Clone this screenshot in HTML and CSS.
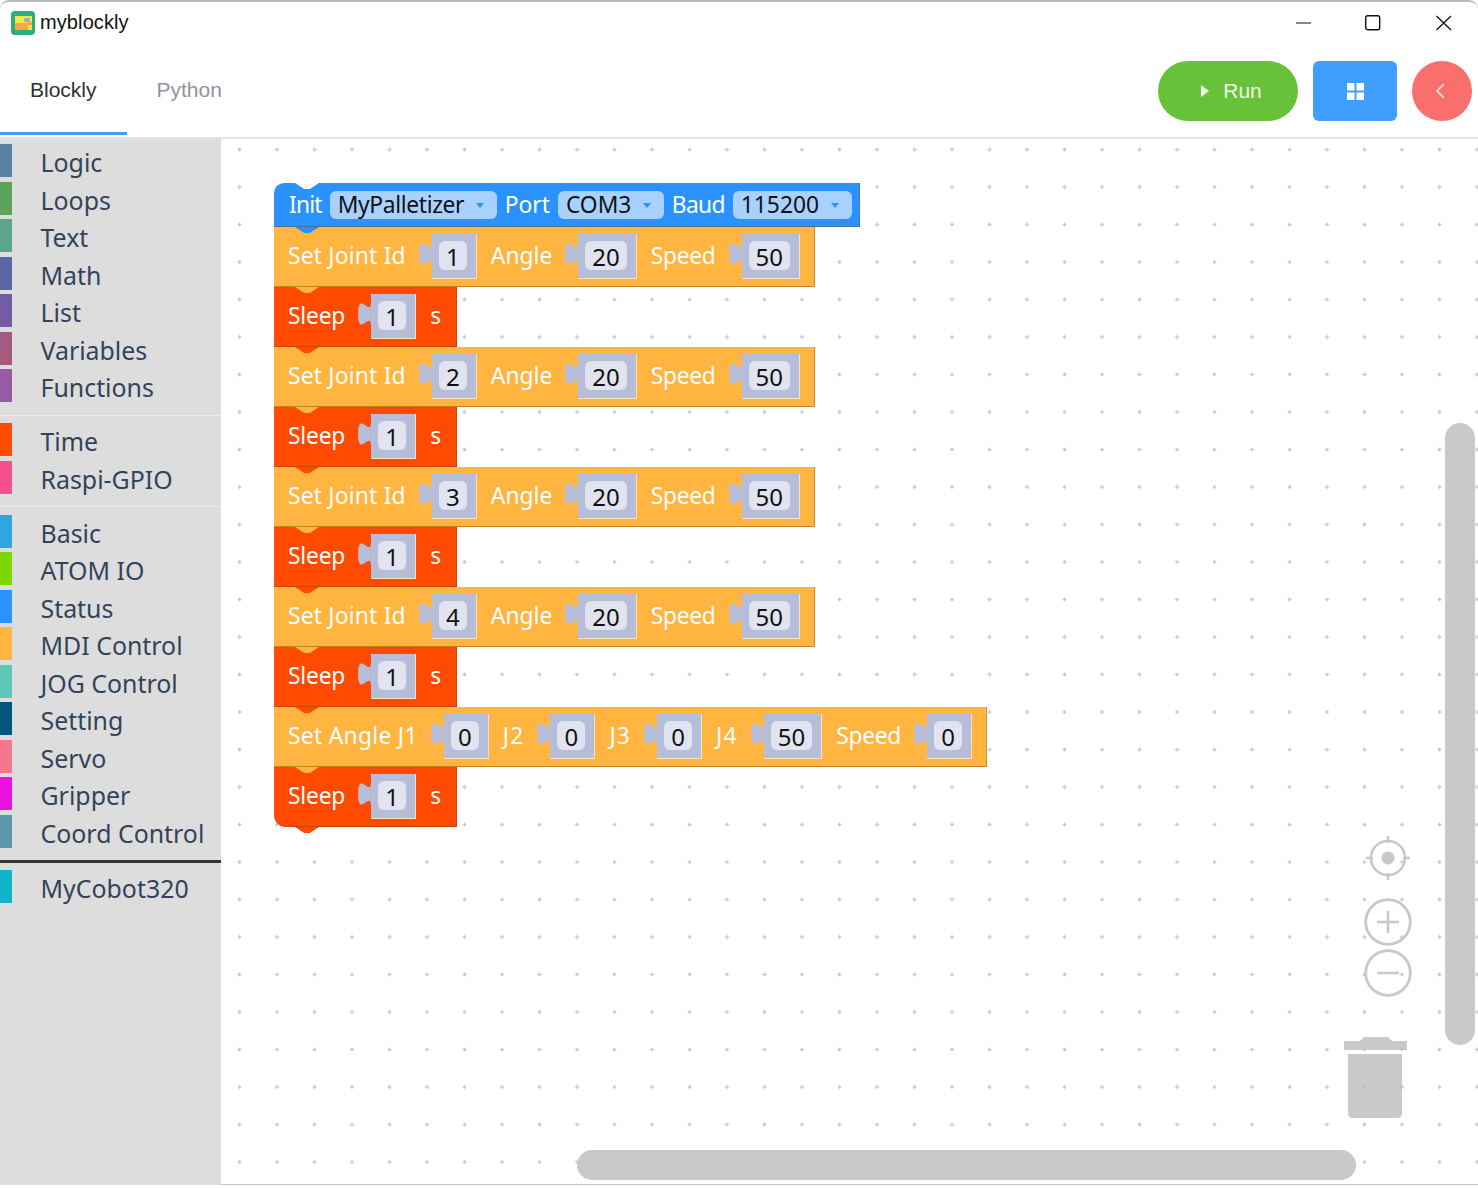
FILE: index.html
```html
<!DOCTYPE html>
<html lang="en">
<head>
<meta charset="utf-8">
<title>myblockly</title>
<link rel="stylesheet" href="styles.css">
</head>
<body>
<div class="window">
  <header class="titlebar">
    <div class="app-title">
      <svg class="logo" viewBox="0 0 24 24" width="24" height="24"><rect width="24" height="24" rx="4" fill="#2dae7a"/><rect x="4" y="5" width="17" height="14" fill="#f6e64a"/><rect x="13" y="7" width="6" height="4" rx="1" fill="#8fb6c8"/><path d="M4 12h12v-1h5v3h-4v5H7l-1 2v-2H4z" fill="#f8a93e"/></svg>
      <span class="app-name">myblockly</span>
    </div>
    <div class="win-controls">
      <svg width="16" height="16" viewBox="0 0 16 16"><path d="M0 8h15" stroke="#111" stroke-width="1.2"/></svg>
      <svg class="wc-max" width="16" height="16" viewBox="0 0 16 16"><rect x=".7" y=".7" width="14" height="14" rx="2" fill="none" stroke="#111" stroke-width="1.4"/></svg>
      <svg width="16" height="16" viewBox="0 0 16 16"><path d="M.5 1l14.500 14M15 1L.5 15" stroke="#111" stroke-width="1.3"/></svg>
    </div>
  </header>

  <nav class="tabbar">
    <div class="tabs">
      <div class="tab tab-active">Blockly</div>
      <div class="tab">Python</div>
    </div>
    <div class="actions">
      <button class="btn btn-run"><svg width="9" height="12" viewBox="0 0 9 12"><path d="M0 0l8 6-8 6z" fill="#f1fbe9"/></svg><span>Run</span></button>
      <button class="btn btn-grid"><svg width="17" height="17" viewBox="0 0 17 17"><path d="M0 0h7.500v7.500H0zM9.500 0H17v7.500H9.500zM0 9.500h7.500V17H0zM9.500 9.500H17V17H9.500z" fill="#fff"/></svg></button>
      <button class="btn btn-back"><svg width="11" height="16" viewBox="0 0 11 16"><path d="M9 1L2 8l7 7" fill="none" stroke="#ffe9e9" stroke-width="1.6"/></svg></button>
    </div>
  </nav>

  <main class="main">
    <aside class="toolbox">
      <div class="cat"><i class="chip c-logic"></i>Logic</div>
      <div class="cat"><i class="chip c-loops"></i>Loops</div>
      <div class="cat"><i class="chip c-text"></i>Text</div>
      <div class="cat"><i class="chip c-math"></i>Math</div>
      <div class="cat"><i class="chip c-list"></i>List</div>
      <div class="cat"><i class="chip c-vars"></i>Variables</div>
      <div class="cat"><i class="chip c-func"></i>Functions</div>
      <div class="sep"></div>
      <div class="cat"><i class="chip c-time"></i>Time</div>
      <div class="cat"><i class="chip c-gpio"></i>Raspi-GPIO</div>
      <div class="sep"></div>
      <div class="cat"><i class="chip c-basic"></i>Basic</div>
      <div class="cat"><i class="chip c-atom"></i>ATOM IO</div>
      <div class="cat"><i class="chip c-status"></i>Status</div>
      <div class="cat"><i class="chip c-mdi"></i>MDI Control</div>
      <div class="cat"><i class="chip c-jog"></i>JOG Control</div>
      <div class="cat"><i class="chip c-setting"></i>Setting</div>
      <div class="cat"><i class="chip c-servo"></i>Servo</div>
      <div class="cat"><i class="chip c-grip"></i>Gripper</div>
      <div class="cat"><i class="chip c-coord"></i>Coord Control</div>
      <div class="sep-dark"></div>
      <div class="cat"><i class="chip c-cobot"></i>MyCobot320</div>
    </aside>

    <section class="workspace">
      <svg class="grid" width="100%" height="100%">
        <defs><pattern id="dots" x="16" y="8" width="37.5" height="37.5" patternUnits="userSpaceOnUse"><path d="M0 2.500h5M2.500 0v5" stroke="#e2e2e2" stroke-width="1"/><circle cx="2.500" cy="2.500" r="1.500" fill="#c8c8c8"/></pattern></defs>
        <rect width="100%" height="100%" fill="url(#dots)"/>
      </svg>

      <div class="stack">
        <div class="block b-init">
          <span class="lbl ls-init">Init</span>
          <span class="drop"><span class="ls-pal">MyPalletizer</span><i class="arrow"></i></span>
          <span class="lbl">Port</span>
          <span class="drop">COM3<i class="arrow"></i></span>
          <span class="lbl ls-baud">Baud</span>
          <span class="drop">115200<i class="arrow"></i></span>
        </div>

        <div class="block b-set">
          <span class="lbl ls-joint">Set Joint Id</span>
          <span class="input"><svg class="plug" width="13" height="24" viewBox="0 0 8 15"><path d="M8 0c0 10-8-8-8 7.500s8-2.500 8 7.500z"/></svg><span class="socket"><b class="num">1</b></span></span>
          <span class="lbl">Angle</span>
          <span class="input"><svg class="plug" width="13" height="24" viewBox="0 0 8 15"><path d="M8 0c0 10-8-8-8 7.500s8-2.500 8 7.500z"/></svg><span class="socket"><b class="num">20</b></span></span>
          <span class="lbl ls-speed">Speed</span>
          <span class="input"><svg class="plug" width="13" height="24" viewBox="0 0 8 15"><path d="M8 0c0 10-8-8-8 7.500s8-2.500 8 7.500z"/></svg><span class="socket"><b class="num">50</b></span></span>
        </div>
        <div class="block b-sleep">
          <span class="lbl ls-sleep">Sleep</span>
          <span class="input"><svg class="plug" width="13" height="24" viewBox="0 0 8 15"><path d="M8 0c0 10-8-8-8 7.500s8-2.500 8 7.500z"/></svg><span class="socket"><b class="num">1</b></span></span>
          <span class="lbl">s</span>
        </div>

        <div class="block b-set">
          <span class="lbl ls-joint">Set Joint Id</span>
          <span class="input"><svg class="plug" width="13" height="24" viewBox="0 0 8 15"><path d="M8 0c0 10-8-8-8 7.500s8-2.500 8 7.500z"/></svg><span class="socket"><b class="num">2</b></span></span>
          <span class="lbl">Angle</span>
          <span class="input"><svg class="plug" width="13" height="24" viewBox="0 0 8 15"><path d="M8 0c0 10-8-8-8 7.500s8-2.500 8 7.500z"/></svg><span class="socket"><b class="num">20</b></span></span>
          <span class="lbl ls-speed">Speed</span>
          <span class="input"><svg class="plug" width="13" height="24" viewBox="0 0 8 15"><path d="M8 0c0 10-8-8-8 7.500s8-2.500 8 7.500z"/></svg><span class="socket"><b class="num">50</b></span></span>
        </div>
        <div class="block b-sleep">
          <span class="lbl ls-sleep">Sleep</span>
          <span class="input"><svg class="plug" width="13" height="24" viewBox="0 0 8 15"><path d="M8 0c0 10-8-8-8 7.500s8-2.500 8 7.500z"/></svg><span class="socket"><b class="num">1</b></span></span>
          <span class="lbl">s</span>
        </div>

        <div class="block b-set">
          <span class="lbl ls-joint">Set Joint Id</span>
          <span class="input"><svg class="plug" width="13" height="24" viewBox="0 0 8 15"><path d="M8 0c0 10-8-8-8 7.500s8-2.500 8 7.500z"/></svg><span class="socket"><b class="num">3</b></span></span>
          <span class="lbl">Angle</span>
          <span class="input"><svg class="plug" width="13" height="24" viewBox="0 0 8 15"><path d="M8 0c0 10-8-8-8 7.500s8-2.500 8 7.500z"/></svg><span class="socket"><b class="num">20</b></span></span>
          <span class="lbl ls-speed">Speed</span>
          <span class="input"><svg class="plug" width="13" height="24" viewBox="0 0 8 15"><path d="M8 0c0 10-8-8-8 7.500s8-2.500 8 7.500z"/></svg><span class="socket"><b class="num">50</b></span></span>
        </div>
        <div class="block b-sleep">
          <span class="lbl ls-sleep">Sleep</span>
          <span class="input"><svg class="plug" width="13" height="24" viewBox="0 0 8 15"><path d="M8 0c0 10-8-8-8 7.500s8-2.500 8 7.500z"/></svg><span class="socket"><b class="num">1</b></span></span>
          <span class="lbl">s</span>
        </div>

        <div class="block b-set">
          <span class="lbl ls-joint">Set Joint Id</span>
          <span class="input"><svg class="plug" width="13" height="24" viewBox="0 0 8 15"><path d="M8 0c0 10-8-8-8 7.500s8-2.500 8 7.500z"/></svg><span class="socket"><b class="num">4</b></span></span>
          <span class="lbl">Angle</span>
          <span class="input"><svg class="plug" width="13" height="24" viewBox="0 0 8 15"><path d="M8 0c0 10-8-8-8 7.500s8-2.500 8 7.500z"/></svg><span class="socket"><b class="num">20</b></span></span>
          <span class="lbl ls-speed">Speed</span>
          <span class="input"><svg class="plug" width="13" height="24" viewBox="0 0 8 15"><path d="M8 0c0 10-8-8-8 7.500s8-2.500 8 7.500z"/></svg><span class="socket"><b class="num">50</b></span></span>
        </div>
        <div class="block b-sleep">
          <span class="lbl ls-sleep">Sleep</span>
          <span class="input"><svg class="plug" width="13" height="24" viewBox="0 0 8 15"><path d="M8 0c0 10-8-8-8 7.500s8-2.500 8 7.500z"/></svg><span class="socket"><b class="num">1</b></span></span>
          <span class="lbl">s</span>
        </div>

        <div class="block b-set">
          <span class="lbl ls-angle">Set Angle J1</span>
          <span class="input"><svg class="plug" width="13" height="24" viewBox="0 0 8 15"><path d="M8 0c0 10-8-8-8 7.500s8-2.500 8 7.500z"/></svg><span class="socket"><b class="num">0</b></span></span>
          <span class="lbl ls-j">J2</span>
          <span class="input"><svg class="plug" width="13" height="24" viewBox="0 0 8 15"><path d="M8 0c0 10-8-8-8 7.500s8-2.500 8 7.500z"/></svg><span class="socket"><b class="num">0</b></span></span>
          <span class="lbl ls-j">J3</span>
          <span class="input"><svg class="plug" width="13" height="24" viewBox="0 0 8 15"><path d="M8 0c0 10-8-8-8 7.500s8-2.500 8 7.500z"/></svg><span class="socket"><b class="num">0</b></span></span>
          <span class="lbl ls-j">J4</span>
          <span class="input"><svg class="plug" width="13" height="24" viewBox="0 0 8 15"><path d="M8 0c0 10-8-8-8 7.500s8-2.500 8 7.500z"/></svg><span class="socket"><b class="num">50</b></span></span>
          <span class="lbl ls-speed">Speed</span>
          <span class="input"><svg class="plug" width="13" height="24" viewBox="0 0 8 15"><path d="M8 0c0 10-8-8-8 7.500s8-2.500 8 7.500z"/></svg><span class="socket"><b class="num">0</b></span></span>
        </div>
        <div class="block b-sleep b-last">
          <span class="lbl ls-sleep">Sleep</span>
          <span class="input"><svg class="plug" width="13" height="24" viewBox="0 0 8 15"><path d="M8 0c0 10-8-8-8 7.500s8-2.500 8 7.500z"/></svg><span class="socket"><b class="num">1</b></span></span>
          <span class="lbl">s</span>
        </div>
      </div>

      <svg class="ctl ctl-center" width="48" height="48" viewBox="0 0 48 48"><g fill="none" stroke="#c8c8c8" stroke-width="2.500"><circle cx="24" cy="24" r="17"/><path d="M24 2v7M24 39v7M2 24h7M39 24h7"/></g><circle cx="24" cy="24" r="6.500" fill="#c8c8c8"/></svg>
      <svg class="ctl ctl-plus" width="48" height="48" viewBox="0 0 48 48"><g fill="none" stroke="#c8c8c8"><circle cx="24" cy="24" r="22.300" stroke-width="2.800"/><path d="M24 13v22M13 24h22" stroke-width="2.500"/></g></svg>
      <svg class="ctl ctl-minus" width="48" height="48" viewBox="0 0 48 48"><g fill="none" stroke="#c8c8c8"><circle cx="24" cy="24" r="22.300" stroke-width="2.800"/><path d="M13 24h22" stroke-width="2.500"/></g></svg>
      <svg class="ctl ctl-trash" width="64" height="86" viewBox="0 0 64 86"><path fill="#bbb" fill-opacity=".8" d="M0 8h16l3-3c1-1 2-1 3-1h20c1 0 2 0 3 1l3 3h15v9H0zM4 21h54v60c0 2-2 4-4 4H8c-2 0-4-2-4-4z"/></svg>

      <div class="sb sb-v"></div>
      <div class="sb sb-h"></div>
    </section>
  </main>
</div>
</body>
</html>
```

FILE: styles.css
```css
* { box-sizing: border-box; }
html, body { margin: 0; padding: 0; height: 100%; background: #fff; }
body { overflow: hidden; font-family: "Liberation Sans", Arial, sans-serif; }

.window {
  width: 1478px;
  height: 1188px;
  display: flex;
  flex-direction: column;
  border-top: 2px solid #b9b9b9;
  border-radius: 9px 9px 0 0;
  overflow: hidden;
  background: #fff;
}

/* title bar */
.titlebar {
  height: 43px;
  flex: none;
  display: flex;
  justify-content: space-between;
  align-items: center;
  padding: 0 26px 2px 11px;
}
.app-title { display: flex; align-items: center; gap: 5px; }
.logo { display: block; }
.app-name { font-size: 20px; color: #111; letter-spacing: .1px; }
.win-controls { display: flex; gap: 54px; align-items: center; }
.win-controls svg { display: block; }
.win-controls .wc-max { margin: 0 1px 0 -1px; }

/* tabs */
.tabbar {
  height: 94px;
  flex: none;
  display: flex;
  justify-content: space-between;
  align-items: center;
  border-bottom: 2px solid #e2e4e8;
  padding-right: 6px;
}
.tabs { display: flex; align-self: flex-start; }
.tab {
  height: 90px;
  padding: 2px 30px 0;
  display: flex;
  align-items: center;
  font-size: 21px;
  color: #909399;
  border-bottom: 3px solid transparent;
}
.tab-active { color: #303133; border-bottom-color: #409eff; }
.actions { display: flex; gap: 15px; }
.btn {
  height: 60px;
  border: 0;
  padding: 0;
  display: flex;
  align-items: center;
  justify-content: center;
  font: 21px "Liberation Sans", Arial, sans-serif;
  color: #f1fbe9;
}
.btn-run { width: 140px; border-radius: 30px; background: #67c23a; gap: 13px; padding-left: 7px; }
.btn-grid { width: 84px; border-radius: 6px; background: #409eff; padding-right: 0; }
.btn-back { width: 60px; border-radius: 50%; background: #fb6e6e; padding-right: 3px; }

/* main */
.main { flex: 1; display: flex; min-height: 0; border-bottom: 3px solid #fff; }

.toolbox {
  width: 221px;
  flex: none;
  background: #dddddd;
  padding-top: 3px;
  font-family: "Noto Sans", "Open Sans", sans-serif;
  font-size: 24.9px;
  color: #33445a;
}
.cat {
  height: 37.5px;
  display: flex;
  align-items: flex-start;
  line-height: 40px;
  white-space: nowrap;
}
.chip { width: 12px; height: 33px; margin: 2px 28.5px 0 0; flex: none; }
.sep { height: 1px; background: #eaeaea; margin: 10px 0 5.5px; }
.sep-dark { height: 3px; background: #333; margin: 9.5px 0 5px; }

.c-logic { background: #5b80a5; }
.c-loops { background: #5ba55b; }
.c-text { background: #5ba58c; }
.c-math { background: #5b67a5; }
.c-list { background: #745ba5; }
.c-vars { background: #a55b80; }
.c-func { background: #995ba5; }
.c-time { background: #ff4a00; }
.c-gpio { background: #f4508e; }
.c-basic { background: #2ea6e0; }
.c-atom { background: #7ed800; }
.c-status { background: #2a92ff; }
.c-mdi { background: #ffb53f; }
.c-jog { background: #5dc8b4; }
.c-setting { background: #04557c; }
.c-servo { background: #f5778c; }
.c-grip { background: #ea12e0; }
.c-coord { background: #5f95a8; }
.c-cobot { background: #12b4cc; }

/* workspace */
.workspace { flex: 1; position: relative; overflow: hidden; background: #fff; border-bottom: 1px solid #c8c8c8; }
.grid { position: absolute; inset: 0; display: block; }

.stack {
  position: absolute;
  left: 53px;
  top: 44px;
  display: flex;
  flex-direction: column;
  align-items: flex-start;
  font-family: "Noto Sans", "Open Sans", sans-serif;
  font-size: 22.8px;
}
.block {
  position: relative;
  height: 60px;
  display: flex;
  align-items: center;
  padding: 0 13px 1px 14px;
  gap: 13px;
  color: #fff;
  border-bottom: 1px solid rgba(120, 70, 0, .45);
  border-right: 1px solid rgba(120, 70, 0, .35);
}
.block::after {
  content: "";
  position: absolute;
  z-index: 1;
  left: 21px;
  bottom: -7px;
  width: 24px;
  height: 6px;
  background: inherit;
  clip-path: polygon(0 0, 100% 0, 62% 100%, 38% 100%);
}
.lbl { white-space: nowrap; line-height: 32px; }
.ls-init { letter-spacing: -.8px; }
.ls-baud { letter-spacing: -.7px; }
.ls-pal { letter-spacing: -.35px; }
.ls-joint { letter-spacing: .2px; }
.ls-angle { letter-spacing: .3px; }
.ls-speed { letter-spacing: -.3px; }
.ls-sleep { letter-spacing: -.2px; }
.ls-j { letter-spacing: 1.2px; }
.b-set { background: #ffb53f; }
.b-sleep { background: #ff4a00; padding-right: 15px; }
.b-last { border-bottom-left-radius: 12px; }
.b-init {
  height: 44px;
  background: #2a92ff;
  border-top-left-radius: 10px;
  padding: 1px 7px 0 15px;
  gap: 8px;
}
.b-init::before {
  content: "";
  position: absolute;
  left: 21px;
  top: 0;
  width: 24px;
  height: 6px;
  background: #fff;
  clip-path: polygon(0 0, 100% 0, 62% 100%, 38% 100%);
}
.drop {
  display: flex;
  align-items: center;
  height: 28px;
  padding: 0 12.5px 0 8px;
  gap: 12px;
  background: #a8d1ff;
  border-radius: 6px;
  color: #111;
  line-height: 28px;
  white-space: nowrap;
}
.arrow {
  width: 0;
  height: 0;
  border-left: 4px solid transparent;
  border-right: 4px solid transparent;
  border-top: 5px solid #2a92ff;
}
.input { display: flex; align-items: flex-start; margin-right: 1px; }
.plug { display: block; flex: none; fill: #b5bdd9; margin-top: 8px; }
.socket {
  height: 45px;
  display: flex;
  align-items: center;
  padding: 0 9px 0 7px;
  background: #b5bdd9;
  border-right: 1px solid #f4e2c4;
  border-bottom: 1px solid #f4e2c4;
}
.num {
  font-size: 24px;
  font-weight: 400;
  height: 29px;
  line-height: 31px;
  padding: 0 7px;
  min-width: 28px;
  text-align: center;
  border-radius: 6px;
  background: #e1e4f0;
  color: #111;
}

/* overlay controls */
.ctl { position: absolute; display: block; }
.ctl-center { left: 1143px; top: 695px; }
.ctl-plus { left: 1143px; top: 759px; }
.ctl-minus { left: 1143px; top: 810px; }
.ctl-trash { left: 1123px; top: 894px; }

.sb { position: absolute; background: #c9c9c9; border-radius: 15px; }
.sb-v { left: 1224px; top: 284px; width: 30px; height: 622px; }
.sb-h { left: 356px; top: 1011px; width: 779px; height: 30px; }
```
